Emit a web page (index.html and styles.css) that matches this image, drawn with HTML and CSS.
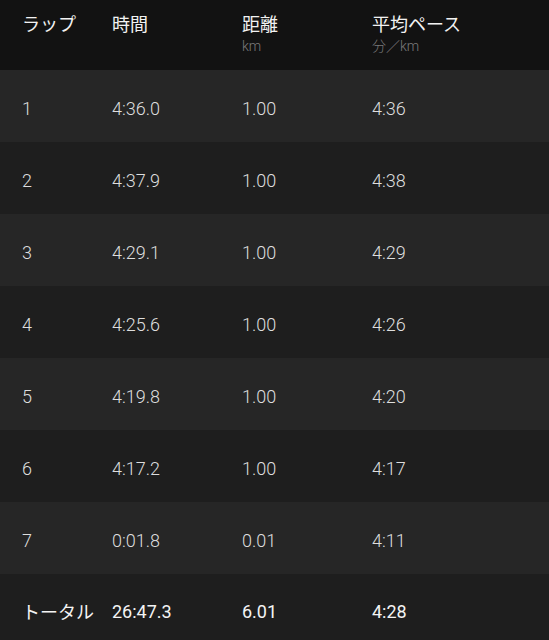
FILE: index.html
```html
<!DOCTYPE html>
<html lang="ja">
<head>
<meta charset="utf-8">
<link rel="stylesheet" href="styles.css">
</head>
<body>
<div class="table">
  <div class="row head">
    <div class="cell"><div class="h">ラップ</div></div>
    <div class="cell"><div class="h">時間</div></div>
    <div class="cell"><div class="h">距離</div><div class="sub">km</div></div>
    <div class="cell"><div class="h">平均ペース</div><div class="sub">分／km</div></div>
  </div>
  <div class="row lap odd"><div class="cell">1</div><div class="cell">4:36.0</div><div class="cell">1.00</div><div class="cell">4:36</div></div>
  <div class="row lap even"><div class="cell">2</div><div class="cell">4:37.9</div><div class="cell">1.00</div><div class="cell">4:38</div></div>
  <div class="row lap odd"><div class="cell">3</div><div class="cell">4:29.1</div><div class="cell">1.00</div><div class="cell">4:29</div></div>
  <div class="row lap even"><div class="cell">4</div><div class="cell">4:25.6</div><div class="cell">1.00</div><div class="cell">4:26</div></div>
  <div class="row lap odd"><div class="cell">5</div><div class="cell">4:19.8</div><div class="cell">1.00</div><div class="cell">4:20</div></div>
  <div class="row lap even"><div class="cell">6</div><div class="cell">4:17.2</div><div class="cell">1.00</div><div class="cell">4:17</div></div>
  <div class="row lap odd"><div class="cell">7</div><div class="cell">0:01.8</div><div class="cell">0.01</div><div class="cell">4:11</div></div>
  <div class="row total"><div class="cell">トータル</div><div class="cell">26:47.3</div><div class="cell">6.01</div><div class="cell">4:28</div></div>
</div>
</body>
</html>
```
FILE: styles.css
```css
html, body {
  margin: 0;
  padding: 0;
  background: #1e1e1e;
}
body {
  width: 549px;
  height: 640px;
  overflow: hidden;
  font-family: Roboto, "Noto Sans CJK JP", sans-serif;
}
.table {
  display: flex;
  flex-direction: column;
}
.row {
  display: grid;
  grid-template-columns: 90px 130px 130px 1fr;
  padding-left: 22px;
  box-sizing: border-box;
}
.head {
  height: 70px;
  background: #121212;
  align-items: start;
  padding-top: 11px;
}
.h {
  font-family: "Noto Sans CJK JP", sans-serif;
  font-size: 18px;
  line-height: 24px;
  color: #f2f2f2;
}
.sub {
  font-family: Roboto, "Noto Sans CJK JP", sans-serif;
  font-size: 14px;
  line-height: 18px;
  margin-top: 2px;
  color: #7a7a7a;
  font-weight: 300;
}
.lap {
  height: 72px;
  align-items: center;
  padding-top: 4px;
  font-size: 18px;
  font-weight: 300;
  color: #dedede;
}
.odd { background: #262626; }
.even { background: #1e1e1e; }
.total {
  height: 66px;
  align-items: center;
  padding-top: 8px;
  background: #1e1e1e;
  font-size: 18px;
  font-weight: 400;
  color: #f4f4f4;
}
.total .cell:first-child {
  font-family: "Noto Sans CJK JP", sans-serif;
}
```
